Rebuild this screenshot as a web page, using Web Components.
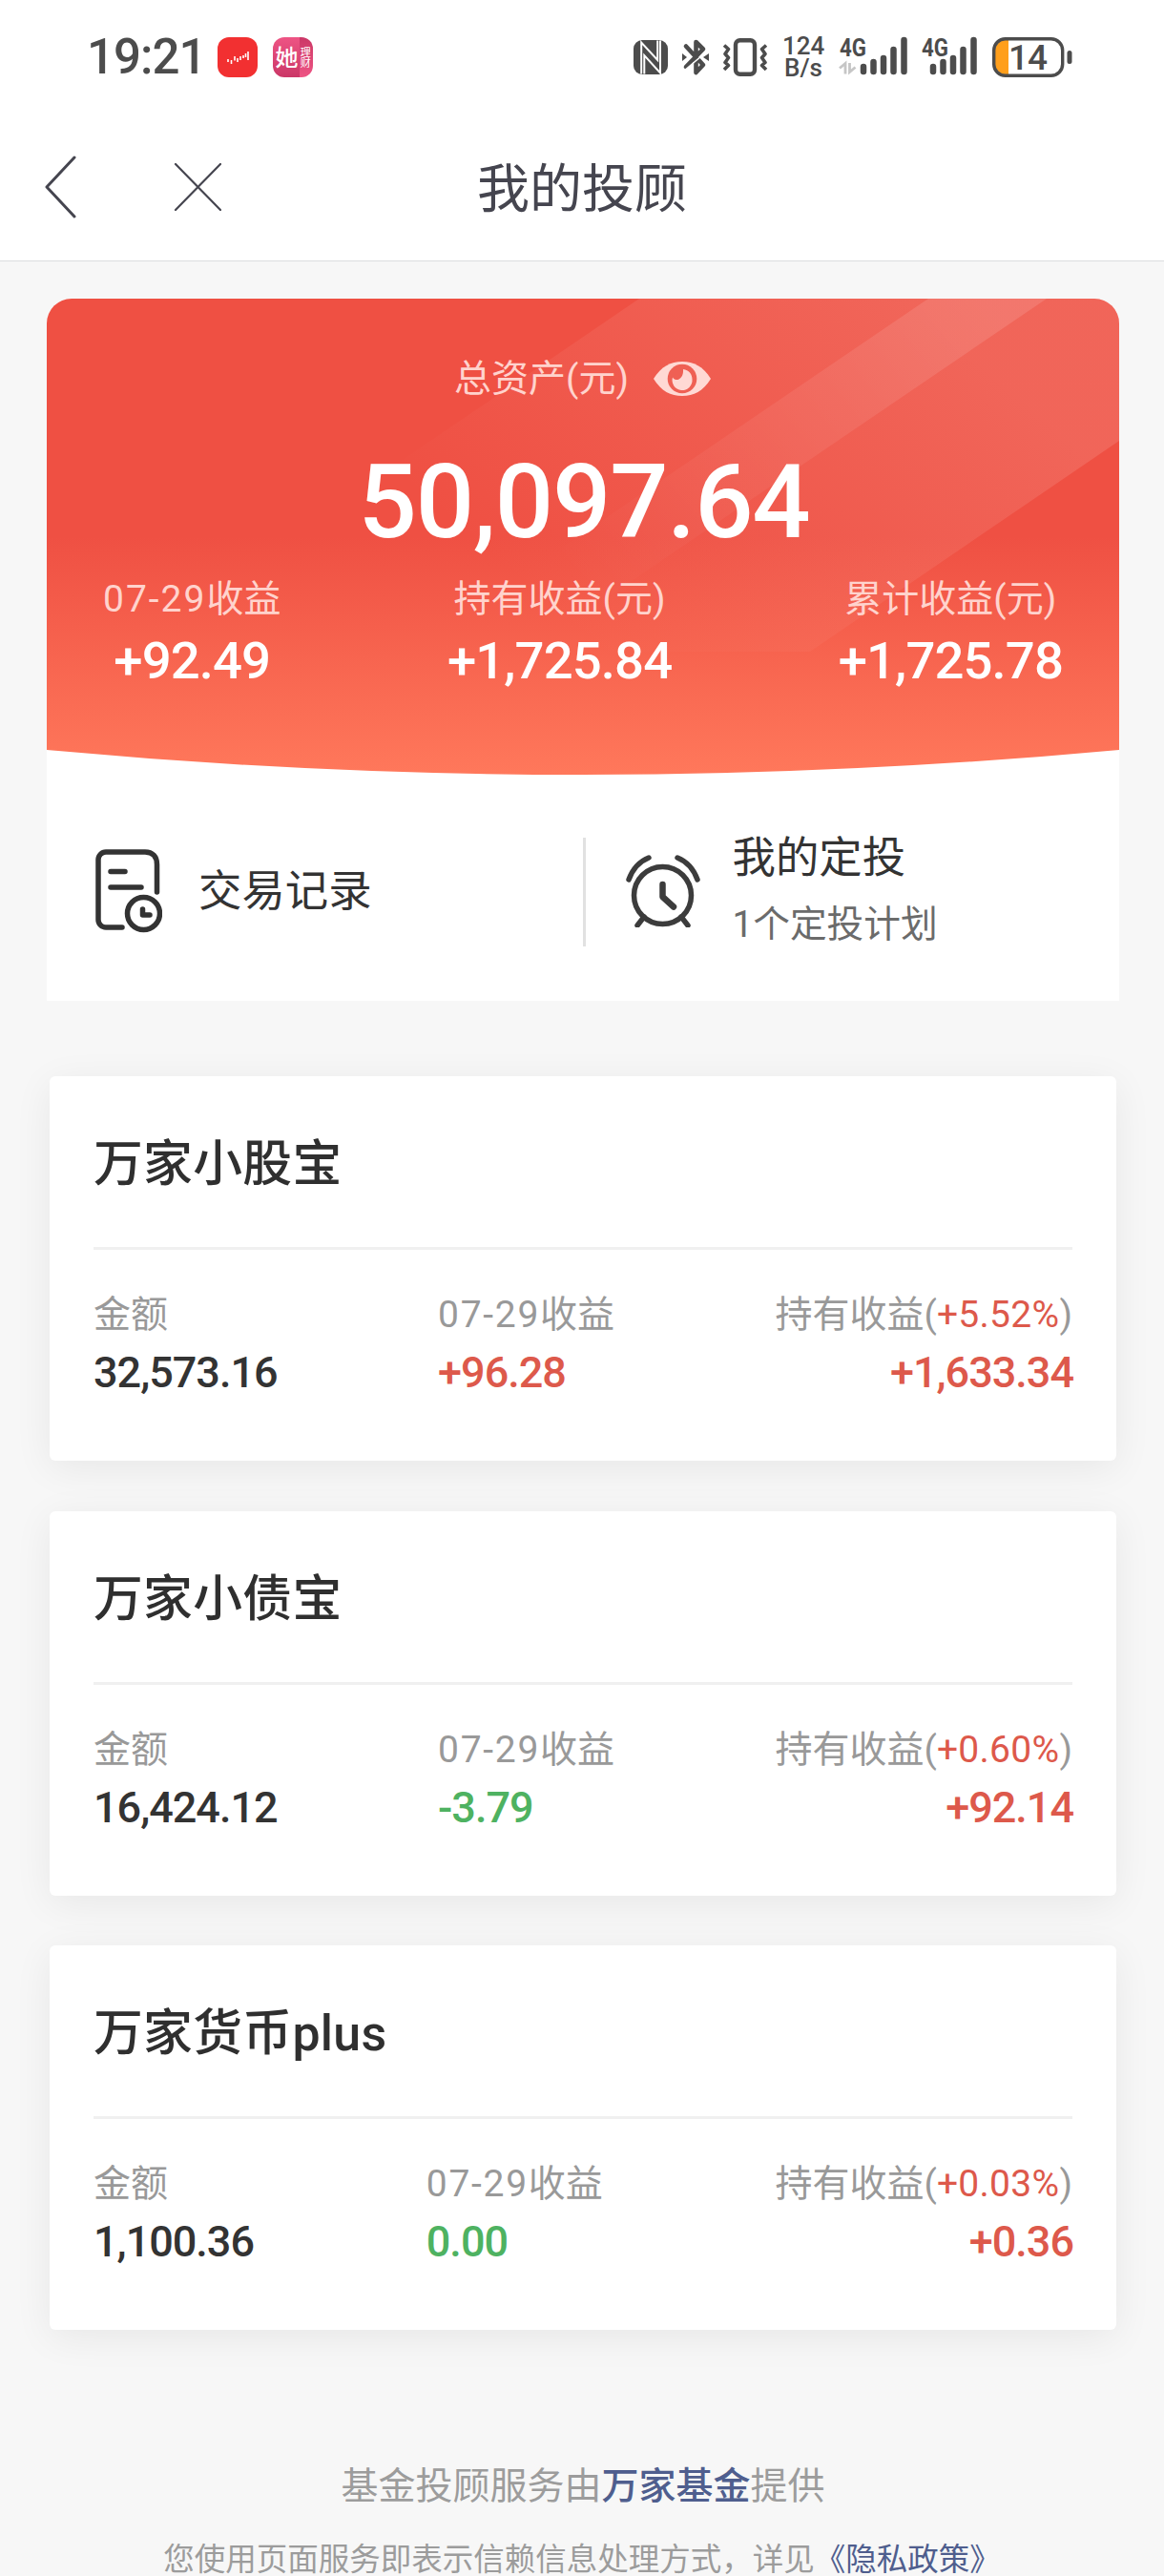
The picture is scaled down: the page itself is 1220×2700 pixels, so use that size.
<!DOCTYPE html>
<html lang="zh-CN">
<head>
<meta charset="utf-8">
<title>我的投顾</title>
<style>
html,body{
    margin:0;
    padding:0;
}
body{
    width:1220px;
    height:2700px;
    overflow:hidden;
    background:#f7f7f7;
    color:#333;
    font-family:Roboto,"Noto Sans CJK SC",sans-serif;
}
</style>
</head>
<body>
<advisor-page></advisor-page>
<script>
class StatusBar extends HTMLElement {

    constructor() {
        super();
        const shadowRoot = this.attachShadow({ mode: 'open' });
        shadowRoot.innerHTML = `
        <style>
        :host{
            display:flex;
            align-items:center;
            justify-content:space-between;
            box-sizing:border-box;
            height:120px;
            padding:0 96px 0 91px;
            color:#4c4c4c;
        }
        .left,.right{
            display:flex;
            align-items:center;
        }
        .time{
            width:137px;
            font-size:51px;
            line-height:60px;
            font-weight:500;
            letter-spacing:-1px;
        }
        .app{
            margin-right:16px;
        }
        svg{
            display:block;
            overflow:visible;
        }
        .speed{
            width:44px;
            margin:0 16px 0 15px;
            font-size:26px;
            line-height:23px;
            font-weight:500;
            text-align:center;
        }
        text{
            font-family:Roboto,"Noto Sans CJK SC",sans-serif;
        }
        </style>
        <div class="left">
            <span class="time">19:21</span>
            <svg class="app" width="42" height="42" viewBox="0 0 42 42">
                <rect width="42" height="42" rx="12" fill="#f23031"/>
                <path d="M11 23v3M14.500 24v4M18 20v4.500M21 22v4M24 20v4M27 19v3M29.500 17v4M32 15v9" stroke="#fff" stroke-width="1.600"/>
            </svg>
            <svg width="42" height="42" viewBox="0 0 42 42">
                <defs>
                    <linearGradient id="a" x2="0" y2="1"><stop stop-color="#ee5484"/><stop offset="1" stop-color="#cb3767"/></linearGradient>
                    <linearGradient id="b" x2="0" y2="1"><stop stop-color="#cb3767"/><stop offset="1" stop-color="#ee5484"/></linearGradient>
                    <clipPath id="c"><rect width="42" height="42" rx="12"/></clipPath>
                </defs>
                <g clip-path="url(#c)">
                    <rect width="28" height="42" fill="url(#a)"/>
                    <rect x="28" width="14" height="42" fill="url(#b)"/>
                </g>
                <text x="2.500" y="29.500" font-size="24" font-weight="500" fill="#fff">她</text>
                <text x="28.800" y="19.500" font-size="11" fill="#fff">理</text>
                <text x="28.800" y="30.500" font-size="11" fill="#fff">财</text>
            </svg>
        </div>
        <div class="right">
            <svg width="36" height="36" viewBox="0 0 36 36">
                <rect width="36" height="36" rx="9" fill="#4c4c4c"/>
                <path d="M8.200 35.500V2.500L25.200 21V.500M11.300 35.500V16L28 34.500V.500" fill="none" stroke="#fff" stroke-width="2"/>
            </svg>
            <svg width="28" height="40" viewBox="0 0 28 40" style="margin:0 14px 0 15px">
                <path d="M4 8.500L22 28L14.500 36V4L22 11.500L4 30" fill="none" stroke="#4c4c4c" stroke-width="4.600" stroke-linejoin="round" stroke-linecap="round"/>
                <path d="M1 35L27 13" stroke="#fff" stroke-width="1.600"/>
                <path d="M0 16l5 4-5 4zM28 16l-6 4 6 4z" fill="#4c4c4c"/>
            </svg>
            <svg width="48" height="40" viewBox="0 0 48 40">
                <rect x="14" y="2.200" width="20" height="35.500" rx="4.500" fill="none" stroke="#4c4c4c" stroke-width="4.400"/>
                <path d="M2 7.500l4.500 4-3.500 5 3.500 4-3.500 5 3.500 3-4.500 4.500M46 7.500l-4.500 4 3.500 5-3.500 4 3.500 5-3.500 3 4.500 4.500" fill="none" stroke="#4c4c4c" stroke-width="3.600" stroke-linejoin="round"/>
            </svg>
            <div class="speed">124<br>B/s</div>
            <svg width="71" height="42" viewBox="0 0 71 42">
                <text x="0" y="20" font-size="25" font-weight="700" textLength="28" lengthAdjust="spacingAndGlyphs" fill="#4c4c4c">4G</text>
                <path d="M25 31v5M35.500 26v10M46 22v14M56.500 13v23M67.500 3v33" stroke="#4c4c4c" stroke-width="6.500" stroke-linecap="round"/>
                <path d="M0 32.500l6-5v11M16.500 31.500l-6 5V27" fill="none" stroke="#c6c6c6" stroke-width="2.800"/>
            </svg>
            <svg width="58" height="42" viewBox="0 0 58 42" style="margin:0 16px 0 15px">
                <text x="0" y="20" font-size="25" font-weight="700" textLength="28" lengthAdjust="spacingAndGlyphs" fill="#4c4c4c">4G</text>
                <path d="M12 31v5M22.500 26v10M33 22v14M43.500 13v23M54.500 3v33" stroke="#4c4c4c" stroke-width="6.500" stroke-linecap="round"/>
            </svg>
            <svg width="84" height="42" viewBox="0 0 84 42">
                <path d="M17 3H14A11 11 0 0 0 3 14V28A11 11 0 0 0 14 39H17z" fill="#ff9f1c"/>
                <rect x="1.700" y="1.700" width="72" height="38.600" rx="12" fill="none" stroke="#4c4c4c" stroke-width="3.400"/>
                <rect x="78.500" y="14" width="5" height="14" rx="2.500" fill="#4c4c4c"/>
                <text x="17" y="34" font-size="37" font-weight="500" textLength="41" fill="#4c4c4c">14</text>
            </svg>
        </div>
        `
    }
}

class NavBar extends HTMLElement {

    constructor() {
        super();
        const shadowRoot = this.attachShadow({ mode: 'open' });
        shadowRoot.innerHTML = `
        <style>
        :host{
            display:grid;
            grid-template-columns:1fr auto 1fr;
            align-items:center;
            box-sizing:border-box;
            height:154px;
            padding:0 46px 1px;
            border-bottom:1px solid #dcdedf;
            color:#45454f;
        }
        .buttons{
            display:flex;
            align-items:center;
            gap:102px;
        }
        .title{
            padding-top:4px;
            font-size:55px;
            line-height:70px;
        }
        svg{
            display:block;
            fill:none;
            stroke:#45454f;
            stroke-linecap:round;
            stroke-linejoin:round;
        }
        </style>
        <div class="buttons">
            <svg width="34" height="66" viewBox="0 0 34 66" stroke-width="3"><path d="M32 2L3 33l29 31"/></svg>
            <svg width="50" height="50" viewBox="0 0 50 50" stroke-width="2.200"><path d="M2 1l47 48M49 1L2 49"/></svg>
        </div>
        <div class="title"><slot></slot></div>
        <div></div>
        `
    }
}

class SummaryItem extends HTMLElement {

    constructor() {
        super();
        const shadowRoot = this.attachShadow({ mode: 'open' });
        shadowRoot.innerHTML = `
        <style>
        :host{
            display:flex;
            flex-direction:column;
            align-items:center;
            white-space:nowrap;
        }
        .label{
            font-size:39px;
            line-height:54px;
            color:#ffd3cd;
        }
        .value{
            margin-top:1px;
            font-size:54.500px;
            line-height:72px;
            font-weight:500;
            letter-spacing:-.900px;
            color:#fff;
        }
        </style>
        <div class="label"><slot name="label"></slot></div>
        <div class="value"><slot></slot></div>
        `
    }
}

class AssetPanel extends HTMLElement {

    constructor() {
        super();
        const shadowRoot = this.attachShadow({ mode: 'open' });
        shadowRoot.innerHTML = `
        <style>
        :host{
            display:block;
            width:1124px;
            margin:39px auto 0 49px;
            border-radius:26px 26px 0 0;
            overflow:hidden;
            background:#fff;
        }
        .hero{
            display:grid;
            height:500px;
        }
        .bg,.content{
            grid-area:1/1;
        }
        .bg{
            display:block;
        }
        .content{
            display:flex;
            flex-direction:column;
            z-index:1;
        }
        .total{
            display:flex;
            align-items:center;
            justify-content:center;
            gap:26px;
            margin-top:57px;
            padding-right:1px;
            font-size:39px;
            line-height:54px;
            color:#ffd3cd;
        }
        .amount{
            margin-top:38px;
            padding-left:2px;
            font-size:108px;
            line-height:128px;
            font-weight:500;
            text-align:center;
            letter-spacing:-1.200px;
            color:#fff;
        }
        .summary{
            display:flex;
            justify-content:space-between;
            margin-top:11px;
            padding:0 59px;
        }
        .actions{
            display:grid;
            grid-template-columns:562px 2.500px 1fr;
            align-items:center;
            height:236px;
        }
        .line{
            height:114px;
            margin-top:8px;
            background:#e1e1e1;
        }
        </style>
        <div class="hero">
            <svg class="bg" width="1124" height="500" viewBox="0 0 1124 500">
                <defs>
                    <linearGradient id="base" x2="0" y2="1"><stop offset=".5" stop-color="#ef5043"/><stop offset="1" stop-color="#ff785b"/></linearGradient>
                    <linearGradient id="wide" gradientUnits="userSpaceOnUse" x1="900" y1="0" x2="580" y2="370"><stop stop-color="#f6a89f" stop-opacity=".24"/><stop offset="1" stop-color="#f6a89f" stop-opacity="0"/></linearGradient>
                    <linearGradient id="thin" gradientUnits="userSpaceOnUse" x1="980" y1="0" x2="580" y2="330"><stop stop-color="#fff" stop-opacity=".12"/><stop offset="1" stop-color="#fff" stop-opacity="0"/></linearGradient>
                </defs>
                <path d="M0 0H1124V473Q562 525 0 473z" fill="url(#base)"/>
                <path d="M621 0H1124V149L800 370H78z" fill="url(#wide)"/>
                <path d="M924 0H1048L504 370H380z" fill="url(#thin)"/>
            </svg>
            <div class="content">
                <div class="total">
                    <span>总资产(元)</span>
                    <svg width="60" height="38" viewBox="0 0 60 38">
                        <path d="M0 19C8 6 18 1 30 1s22 5 30 18C52 32 42 37 30 37S8 32 0 19z" fill="#ffd9d4"/>
                        <circle cx="30" cy="19" r="15.300" fill="#ef6054"/>
                        <path d="M31 9C37 10 40.500 14 40.500 19.500a10.500 10.500 0 1 1-20.500-2c4 6 12 1 11-8.500z" fill="#ffd9d4"/>
                    </svg>
                </div>
                <div class="amount">50,097.64</div>
                <div class="summary">
                    <summary-item><span slot="label"><span style="letter-spacing:2px">07-29</span>收益</span>+92.49</summary-item>
                    <summary-item><span slot="label">持有收益(元)</span>+1,725.84</summary-item>
                    <summary-item><span slot="label">累计收益(元)</span>+1,725.78</summary-item>
                </div>
            </div>
        </div>
        <div class="actions">
            <quick-action>
                <svg slot="icon" width="70" height="88" viewBox="0 0 70 88" fill="none" stroke="#333" stroke-width="5.500" stroke-linecap="round" stroke-linejoin="round">
                    <path d="M28 82H11a8 8 0 0 1-8-8V11a8 8 0 0 1 8-8H52c8 0 12.500 5 12.500 13V45M16 23.500H31M16 40H48"/>
                    <circle cx="50.500" cy="67.500" r="17"/>
                    <path d="M49.500 63v6H57"/>
                </svg>
                交易记录
            </quick-action>
            <div class="line"></div>
            <quick-action>
                <svg slot="icon" width="78" height="76" viewBox="0 0 78 76" fill="none" stroke="#3c3c3c" stroke-width="5.500" stroke-linecap="round" stroke-linejoin="round">
                    <circle cx="38.500" cy="42.500" r="30" />
                    <path d="M3 26C7 15 14 7 24 3M75 26C71 15 64 7 54 3M19 65l-7 9M58 65l7 9"/>
                    <path d="M38.500 31V44L50 54.500" stroke-width="6.500"/>
                </svg>
                我的定投
                <span slot="note">1个定投计划</span>
            </quick-action>
        </div>
        `
    }
}

class QuickAction extends HTMLElement {

    constructor() {
        super();
        const shadowRoot = this.attachShadow({ mode: 'open' });
        shadowRoot.innerHTML = `
        <style>
        :host{
            display:flex;
            align-items:center;
            gap:38px;
            padding:6px 0 0 51px;
            color:#333;
        }
        :host(:last-child){
            padding-left:42px;
            gap:34px;
        }
        .text{
            font-size:45.400px;
            line-height:69px;
        }
        ::slotted([slot="note"]){
            display:block;
            font-size:38.700px;
            color:#6b6b6b;
        }
        ::slotted(svg){
            display:block;
        }
        </style>
        <slot name="icon"></slot>
        <div class="text"><slot></slot><slot name="note"></slot></div>
        `
    }
}

class FundCard extends HTMLElement {

    constructor() {
        super();
        const shadowRoot = this.attachShadow({ mode: 'open' });
        shadowRoot.innerHTML = `
        <style>
        :host{
            display:block;
            box-sizing:border-box;
            height:403px;
            padding:0 46px;
            border-radius:6px;
            background:#fff;
            box-shadow:0 8px 40px rgba(0,0,0,.065);
        }
        .name{
            height:179px;
            border-bottom:3px solid #f0f0f0;
            font-size:51.800px;
            line-height:185px;
            font-weight:500;
            letter-spacing:.300px;
            color:#2f2f2f;
        }
        .data{
            display:flex;
            justify-content:space-between;
            padding-top:40px;
            white-space:nowrap;
        }
        .data>div:last-child{
            text-align:right;
        }
        .label{
            font-size:39px;
            line-height:56px;
            color:#999;
        }
        .value{
            margin-top:3px;
            font-size:45px;
            line-height:60px;
            font-weight:500;
            letter-spacing:-1px;
            color:#333;
        }
        .data>div:last-child .value{
            margin-right:-1px;
        }
        .date{
            letter-spacing:1.700px;
        }
        .rate{
            letter-spacing:.300px;
        }
        .up{
            color:#dd594b;
        }
        .down{
            color:#4eb261;
        }
        </style>
        <div class="name">${this.name}</div>
        <div class="data">
            <div>
                <div class="label">金额</div>
                <div class="value">${this.amount}</div>
            </div>
            <div>
                <div class="label"><span class="date">07-29</span>收益</div>
                <div class="value ${this.trend(this.daily)}">${this.daily}</div>
            </div>
            <div>
                <div class="label">持有收益(<span class="rate up">${this.rate}</span>)</div>
                <div class="value ${this.trend(this.profit)}">${this.profit}</div>
            </div>
        </div>
        `
    }

    get name() {
        return this.getAttribute('name')||'';
    }

    get amount() {
        return this.getAttribute('amount')||'';
    }

    get daily() {
        return this.getAttribute('daily')||'';
    }

    get rate() {
        return this.getAttribute('rate')||'';
    }

    get profit() {
        return this.getAttribute('profit')||'';
    }

    // gains are red, flat and losses are green
    trend(value) {
        return value.startsWith('+')?'up':'down';
    }
}

class PageFooter extends HTMLElement {

    constructor() {
        super();
        const shadowRoot = this.attachShadow({ mode: 'open' });
        shadowRoot.innerHTML = `
        <style>
        :host{
            display:block;
            padding-top:134px;
            text-align:center;
            white-space:nowrap;
            color:#9c9c9c;
        }
        .provider{
            padding-left:2px;
            font-size:39px;
            line-height:60px;
        }
        .policy{
            margin-top:22px;
            font-size:32.500px;
            line-height:50px;
        }
        a{
            color:#4f5e8e;
        }
        .provider a{
            font-weight:500;
        }
        </style>
        <div class="provider">基金投顾服务由<a>万家基金</a>提供</div>
        <div class="policy">您使用页面服务即表示信赖信息处理方式，详见<a>《隐私政策》</a></div>
        `
    }
}

class AdvisorPage extends HTMLElement {

    constructor() {
        super();
        const shadowRoot = this.attachShadow({ mode: 'open' });
        shadowRoot.innerHTML = `
        <style>
        :host{
            display:block;
        }
        header{
            background:#fff;
        }
        .funds{
            display:flex;
            flex-direction:column;
            gap:52.700px;
            margin:79px 50px 0 52px;
        }
        </style>
        <header>
            <status-bar></status-bar>
            <nav-bar>我的投顾</nav-bar>
        </header>
        <asset-panel></asset-panel>
        <div class="funds">
            <fund-card name="万家小股宝" amount="32,573.16" daily="+96.28" rate="+5.52%" profit="+1,633.34"></fund-card>
            <fund-card name="万家小债宝" amount="16,424.12" daily="-3.79" rate="+0.60%" profit="+92.14"></fund-card>
            <fund-card name="万家货币plus" amount="1,100.36" daily="0.00" rate="+0.03%" profit="+0.36"></fund-card>
        </div>
        <page-footer></page-footer>
        `
    }
}

customElements.define('status-bar', StatusBar);
customElements.define('nav-bar', NavBar);
customElements.define('summary-item', SummaryItem);
customElements.define('quick-action', QuickAction);
customElements.define('asset-panel', AssetPanel);
customElements.define('fund-card', FundCard);
customElements.define('page-footer', PageFooter);
customElements.define('advisor-page', AdvisorPage);
</script>
</body>
</html>
